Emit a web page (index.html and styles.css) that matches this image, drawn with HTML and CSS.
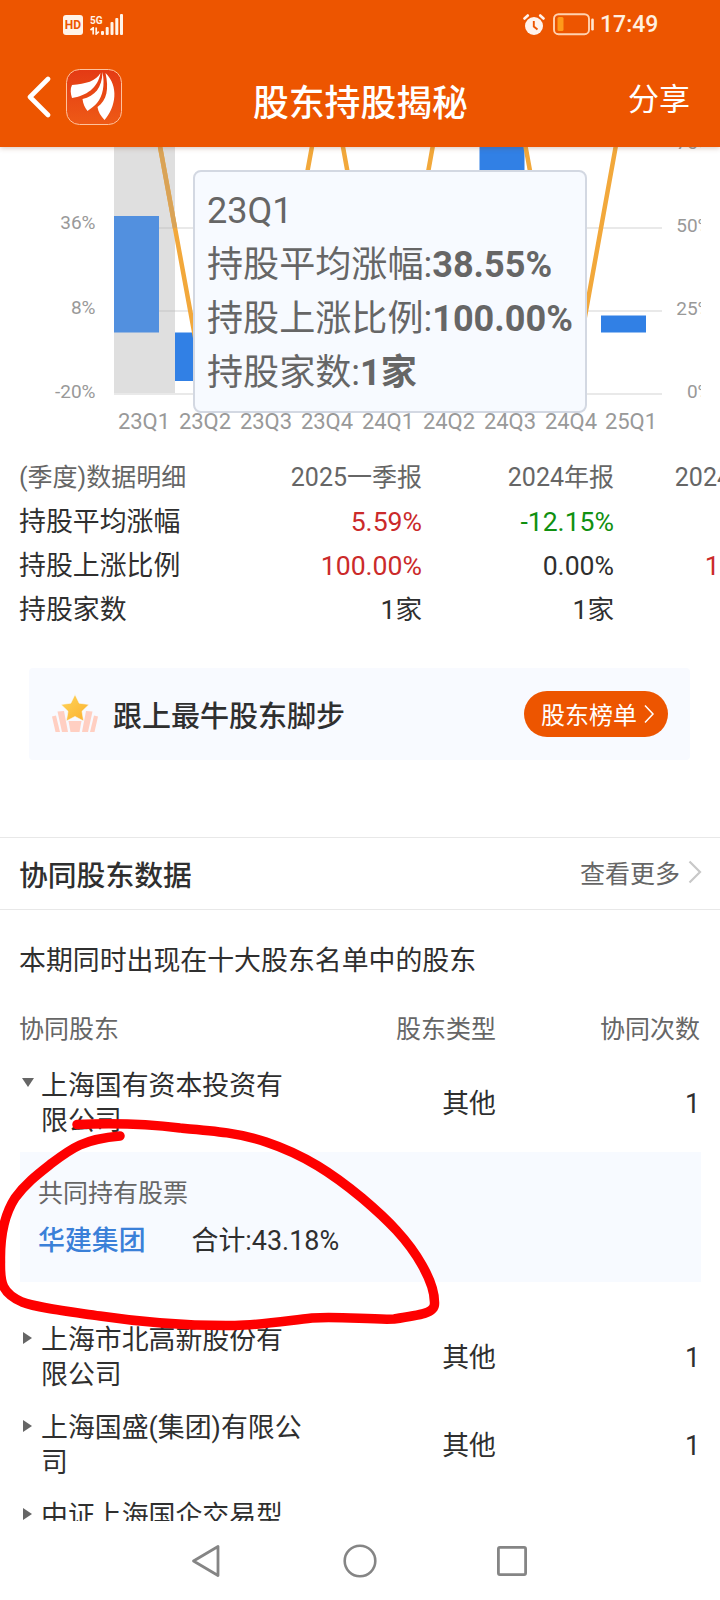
FILE: index.html
```
<!DOCTYPE html>
<html lang="zh-CN">
<head>
  <meta charset="UTF-8" />
  <title>股东持股揭秘</title>
  <link rel="stylesheet" href="styles.css">
</head>
<body>
  <header class="top">
    <div class="status-bar">
      <div class="status-left">
        <span class="hd">HD</span>
        <div class="net">
          <span>5G</span>
          <svg width="10" height="8" viewBox="0 0 10 8"><path d="M0.5 3L3.2 0.8V7.4M6.2 0.5V7L8.8 4.6" fill="none" stroke="#fff3e8" stroke-width="1.7"/></svg>
        </div>
        <svg class="signal" width="23" height="21" viewBox="0 0 23 21" fill="#fff3e8">
          <rect x="0" y="17" width="3" height="4" rx="1"/>
          <rect x="4.7" y="13" width="3" height="8" rx="1"/>
          <rect x="9.5" y="8" width="3" height="13" rx="1"/>
          <rect x="14.3" y="4" width="3" height="17" rx="1"/>
          <rect x="19" y="0" width="3" height="21" rx="1"/>
        </svg>
      </div>
      <div class="status-right">
        <svg width="22" height="22" viewBox="0 0 22 22">
          <circle cx="11" cy="12" r="9" fill="#fff3ec"/>
          <path d="M1.5 4.5L4.8 1.5M17.2 1.5L20.5 4.5" stroke="#fff3ec" stroke-width="2.6" stroke-linecap="round"/>
          <path d="M10.8 7V12.5L14.5 15.5" fill="none" stroke="#ed5500" stroke-width="1.9"/>
        </svg>
        <svg class="battery" width="41" height="23" viewBox="0 0 41 23">
          <rect x="1" y="1.2" width="35" height="20" rx="4.5" fill="none" stroke="#ffd2b0" stroke-width="1.9"/>
          <rect x="4.5" y="4" width="6" height="14" rx="1.5" fill="#ff9a1a"/>
          <rect x="38.2" y="5.5" width="2.6" height="12" rx="1.2" fill="#ffe6d2"/>
        </svg>
        <span class="time">17:49</span>
      </div>
    </div>
    <div class="nav">
      <div class="nav-left">
        <svg width="26" height="42" viewBox="0 0 26 42"><path d="M22 3L4 21L22 39" fill="none" stroke="#fff" stroke-width="4.6" stroke-linecap="round" stroke-linejoin="round"/></svg>
        <svg class="logo" width="56" height="56" viewBox="0 0 56 56">
          <defs><linearGradient id="lg" x1="0" y1="0" x2="0" y2="1"><stop offset="0" stop-color="#e43a14"/><stop offset="1" stop-color="#ee5a16"/></linearGradient></defs>
          <rect x="0.5" y="0.5" width="55" height="55" rx="13" fill="url(#lg)" stroke="#ffc29c"/>
          <g fill="#fff">
            <path d="M34.500 4C30 12 20 15 6 16C4 20 4.500 24 6 29C20 27 32 19 34.500 4Z"/>
            <path d="M36.500 3C36 19 29 27 16.500 30C17 35 19 39 21.500 42C25 39 29 37 31 34C37 27 39 16 36.500 3Z"/>
            <path d="M39.500 4C43 20 41 31 31.500 38C32 43 35 47 38.500 51C50 38 53 17 39.500 4Z"/>
          </g>
        </svg>
      </div>
      <h1>股东持股揭秘</h1>
      <span class="share">分享</span>
    </div>
  </header>

  <main>
    <section class="chart">
      <svg width="720" height="290" viewBox="0 147 720 290">
        <defs><clipPath id="axisClip"><rect x="660" y="147" width="41" height="290"/></clipPath></defs>
        <g stroke="#e9e9e9" stroke-width="2">
          <path d="M114 228H662M114 311H662M114 394H662"/>
        </g>
        <rect x="114" y="147" width="61" height="246" fill="#dfdfdf"/>
        <path d="M159 228H175M159 311H175" stroke="#d2d2d2" stroke-width="2"/>
        <rect x="114" y="216" width="45" height="116.500" fill="#5290df"/>
        <g fill="#3180e5">
          <rect x="175" y="332.500" width="45" height="48.500"/>
          <rect x="479.500" y="147" width="45" height="60"/>
          <rect x="601" y="315.500" width="45" height="17"/>
        </g>
        <polyline points="144.500,62 205.500,394 266.500,394 327.500,62 388,394 448,62 510,62 571,394 631,62" fill="none" stroke="#f2a83b" stroke-width="4.500"/>
        <path d="M160.100 147L175 228" stroke="#d9a357" stroke-width="4.500"/>
        <g class="axis" text-anchor="end">
          <text x="95.500" y="229">36%</text>
          <text x="95.500" y="314">8%</text>
          <text x="95.500" y="398">-20%</text>
        </g>
        <g class="axis" text-anchor="end" clip-path="url(#axisClip)">
          <text x="711.500" y="149">75%</text>
          <text x="711.500" y="232">50%</text>
          <text x="711.500" y="315">25%</text>
          <text x="711.500" y="398">0%</text>
        </g>
        <g class="quarter" text-anchor="middle">
          <text x="144" y="429">23Q1</text>
          <text x="205" y="429">23Q2</text>
          <text x="266" y="429">23Q3</text>
          <text x="327" y="429">23Q4</text>
          <text x="388" y="429">24Q1</text>
          <text x="449" y="429">24Q2</text>
          <text x="510" y="429">24Q3</text>
          <text x="571" y="429">24Q4</text>
          <text x="631" y="429">25Q1</text>
        </g>
      </svg>
      <div class="tooltip">
        <div>23Q1</div>
        <div>持股平均涨幅:<b>38.55%</b></div>
        <div>持股上涨比例:<b>100.00%</b></div>
        <div>持股家数:<b>1家</b></div>
      </div>
    </section>

    <section class="detail">
      <div class="detail-row head"><span>(季度)数据明细</span><span>2025一季报</span><span>2024年报</span><span>2024三季报</span></div>
      <div class="detail-row"><span>持股平均涨幅</span><span class="up">5.59%</span><span class="down">-12.15%</span><span></span></div>
      <div class="detail-row"><span>持股上涨比例</span><span class="up">100.00%</span><span>0.00%</span><span class="up">100.00%</span></div>
      <div class="detail-row"><span>持股家数</span><span>1家</span><span>1家</span><span></span></div>
    </section>

    <section class="banner">
      <svg width="46" height="40" viewBox="0 0 46 40">
        <defs><linearGradient id="star" x1="0" y1="0" x2="1" y2="1"><stop offset="0" stop-color="#ffd55c"/><stop offset="1" stop-color="#fbb02c"/></linearGradient></defs>
        <g fill="#ffcfc2">
          <path d="M0 22.500L4 21.500L8 38H3.500Z"/>
          <path d="M5.500 17.500L12 17L16 38H10Z"/>
          <path d="M46 22.500L42 21.500L38 38H42.500Z"/>
          <path d="M40.500 17.500L34 17L30 38H36Z"/>
          <path d="M16.500 27H29.500L27.500 38H18.500Z"/>
        </g>
        <path d="M23 0.500L27.200 9.200L37 10.500L30 17.300L31.600 27L23 22.500L14.400 27L16 17.300L9 10.500L18.800 9.200Z" fill="url(#star)" stroke="#f8faff" stroke-width="0.600"/>
      </svg>
      <span class="banner-text">跟上最牛股东脚步</span>
      <span class="rank-btn">股东榜单<svg width="12" height="20" viewBox="0 0 12 20"><path d="M2 1.500L10 10L2 18.500" fill="none" stroke="#fff" stroke-width="1.500"/></svg></span>
    </section>

    <section class="partners">
      <div class="section-head">
        <h2>协同股东数据</h2>
        <span class="more">查看更多<svg width="14" height="24" viewBox="0 0 14 24"><path d="M1.500 1.500L12 12L1.500 22.500" fill="none" stroke="#c8c8c8" stroke-width="2.200"/></svg></span>
      </div>
      <p class="intro">本期同时出现在十大股东名单中的股东</p>
      <div class="row row-head"><span>协同股东</span><span>股东类型</span><span>协同次数</span></div>
      <div class="row">
        <div class="name open">上海国有资本投资有限公司</div><span>其他</span><span>1</span>
      </div>
      <div class="common">
        <div class="common-title">共同持有股票</div>
        <div class="common-line"><a>华建集团</a><span>合计:43.18%</span></div>
      </div>
      <div class="row">
        <div class="name">上海市北高新股份有限公司</div><span>其他</span><span>1</span>
      </div>
      <div class="row">
        <div class="name">上海国盛(集团)有限公司</div><span>其他</span><span>1</span>
      </div>
      <div class="row">
        <div class="name">中证上海国企交易型<br>&nbsp;</div>
      </div>
    </section>
  </main>

  <footer class="sys-nav">
    <svg width="30" height="36" viewBox="0 0 30 36"><path d="M27 3.500V32.500L2.500 18Z" fill="none" stroke="#858585" stroke-width="2.800" stroke-linejoin="round"/></svg>
    <svg width="34" height="34" viewBox="0 0 34 34"><circle cx="17" cy="17" r="15.300" fill="none" stroke="#858585" stroke-width="2.600"/></svg>
    <svg width="30" height="30" viewBox="0 0 30 30"><rect x="1.400" y="1.400" width="27.200" height="27.200" rx="1.500" fill="none" stroke="#858585" stroke-width="2.800"/></svg>
  </footer>

  <svg class="scribble" width="450" height="230" viewBox="0 1110 450 230">
    <path d="M77 1124.500C110 1123 140 1123 180 1128C215 1131 240 1133 266 1142C305 1155 333 1174 362 1198C388 1220 408 1240 422 1265C430 1279 435 1291 434.500 1304C434.500 1313 421 1315 394 1319C370 1320 340 1316 312 1318C285 1321 260 1325 235 1325.500C190 1326 140 1322 100 1316C65 1311 38 1308 22 1302C2 1293 0 1283 0.500 1262C0 1238 4 1215 15 1198C26 1183 38 1174 52 1163C72 1148 84 1139 120 1136" fill="none" stroke="#fe0000" stroke-width="9.500" stroke-linecap="round" stroke-linejoin="round"/>
  </svg>
</body>
</html>
```
FILE: styles.css
```
* {
  box-sizing: border-box;
}

body {
  margin: 0;
  position: relative;
  width: 720px;
  height: 1600px;
  overflow: hidden;
  display: flex;
  flex-direction: column;
  background: #fff;
  color: #2f2f2f;
  font-family: Roboto, "Noto Sans CJK SC", sans-serif;
  font-size: 26.9px;
}

svg {
  display: block;
  flex: none;
}

.top {
  height: 147px;
  flex: none;
  background: #ed5500;
  color: #fff;
  position: relative;
  z-index: 1;
  box-shadow: 0 1px 5px rgba(120, 60, 30, 0.3);
}

.status-bar {
  height: 49px;
  padding: 0 63px;
  display: flex;
  justify-content: space-between;
  align-items: center;
}

.status-left, .status-right {
  display: flex;
  align-items: center;
}

.hd {
  width: 20px;
  height: 20px;
  border-radius: 3px;
  background: #fff3e8;
  color: #ed5500;
  font-size: 12px;
  font-weight: bold;
  line-height: 20px;
  text-align: center;
}

.net {
  width: 12px;
  margin-left: 7px;
  font-size: 10px;
  font-weight: bold;
  line-height: 12px;
  color: #fff3e8;
}

.signal {
  margin-left: -1px;
}

.battery {
  margin-left: 8px;
}

.time {
  width: 57px;
  margin-left: 6px;
  font-size: 23px;
  font-weight: 500;
  color: #fff0e0;
}

.nav {
  height: 98px;
  padding: 0 30px 0 26px;
  display: flex;
  align-items: center;
  justify-content: space-between;
}

.nav-left {
  display: flex;
  align-items: center;
  gap: 14px;
  width: 227px;
  margin-top: -2px;
}

h1 {
  margin: 12px 0 0;
  width: 216px;
  font-size: 35.8px;
  font-weight: 500;
  line-height: 52px;
  white-space: nowrap;
}

.share {
  width: 221px;
  text-align: right;
  font-size: 31px;
  margin-top: -3px;
}

main {
  height: 1374px;
  flex: none;
  overflow: hidden;
}

.chart {
  position: relative;
  height: 290px;
}

.axis {
  font-size: 19px;
  fill: #999;
}

.quarter {
  font-size: 22px;
  fill: #999;
}

.tooltip {
  position: absolute;
  left: 193px;
  top: 23px;
  width: 394px;
  height: 243px;
  padding: 12px 0 0 12px;
  border: 2px solid #d3d8e2;
  border-radius: 8px;
  background: #f7faff;
  color: #666;
  font-size: 36.1px;
  line-height: 54px;
  white-space: nowrap;
}

.detail {
  padding: 19px 0 0 19px;
}

.detail-row {
  display: grid;
  grid-template-columns: 211px 192px 192px 192px;
  line-height: 44px;
  white-space: nowrap;
}

.detail-row:not(.head) span + span {
  font-size: 26.6px;
}

.detail-row span + span {
  text-align: right;
}

.head {
  font-size: 25px;
  color: #666;
}

.up {
  color: #cb2a2a;
}

.down {
  color: #109010;
}

.banner {
  margin: 36px 30px 0 29px;
  height: 92px;
  padding: 0 22px 0 23px;
  display: flex;
  align-items: center;
  background: #f8faff;
  border-radius: 4px;
}

.banner-text {
  margin-left: 15px;
  font-size: 29px;
  font-weight: 500;
}

.rank-btn {
  margin-left: auto;
  width: 144px;
  height: 46px;
  padding: 0 0 1px 17px;
  border-radius: 23px;
  background: #ed5500;
  color: #fff;
  font-size: 24px;
  display: flex;
  align-items: center;
  gap: 6px;
}

.section-head {
  margin-top: 77px;
  height: 73px;
  padding: 0 18px 0 19px;
  border-top: 1px solid #e8e8e8;
  border-bottom: 1px solid #e8e8e8;
  display: flex;
  align-items: center;
  justify-content: space-between;
}

h2 {
  margin: 0;
  font-size: 28.8px;
  font-weight: 500;
}

.more {
  display: flex;
  align-items: center;
  gap: 8px;
  font-size: 25px;
  line-height: 36px;
  margin-top: 3px;
  color: #666;
}

.more svg {
  margin-top: -6px;
}

.intro {
  margin: 31px 0 0 19px;
  line-height: 40px;
}

.row {
  height: 88px;
  padding: 0 20px 0 19px;
  display: grid;
  grid-template-columns: 292px 185px 204px;
  align-items: center;
  line-height: 35px;
}

.row > span + span, .row .name + span {
  text-align: right;
}

.row-head {
  height: 40px;
  margin: 28px 0 11px;
  font-size: 25px;
  color: #666;
}

.name {
  position: relative;
  width: 287px;
  padding-left: 22px;
}

.name::before {
  content: "";
  position: absolute;
  left: 4px;
  top: 9px;
  border: 6px solid transparent;
  border-left: 9px solid #666;
  border-right: 0;
}

.name.open::before {
  left: 3px;
  border: 6px solid transparent;
  border-top: 9px solid #666;
  border-bottom: 0;
}

.common {
  height: 130px;
  margin: 4px 19px 32px 20px;
  padding: 19px 18px;
  background: #f7faff;
}

.common-title {
  font-size: 25px;
  line-height: 46px;
  color: #666;
}

.common-line {
  display: flex;
  gap: 46px;
  line-height: 48px;
}

.common-line a {
  color: #3a80d8;
  font-weight: 500;
}

.sys-nav {
  flex: 1;
  display: flex;
  align-items: center;
  justify-content: center;
  gap: 120px;
  background: #fff;
}

.sys-nav svg:first-child {
  margin: 0 2px 0 -2px;
}

.scribble {
  position: absolute;
  left: 0;
  top: 1110px;
  z-index: 2;
}
```
